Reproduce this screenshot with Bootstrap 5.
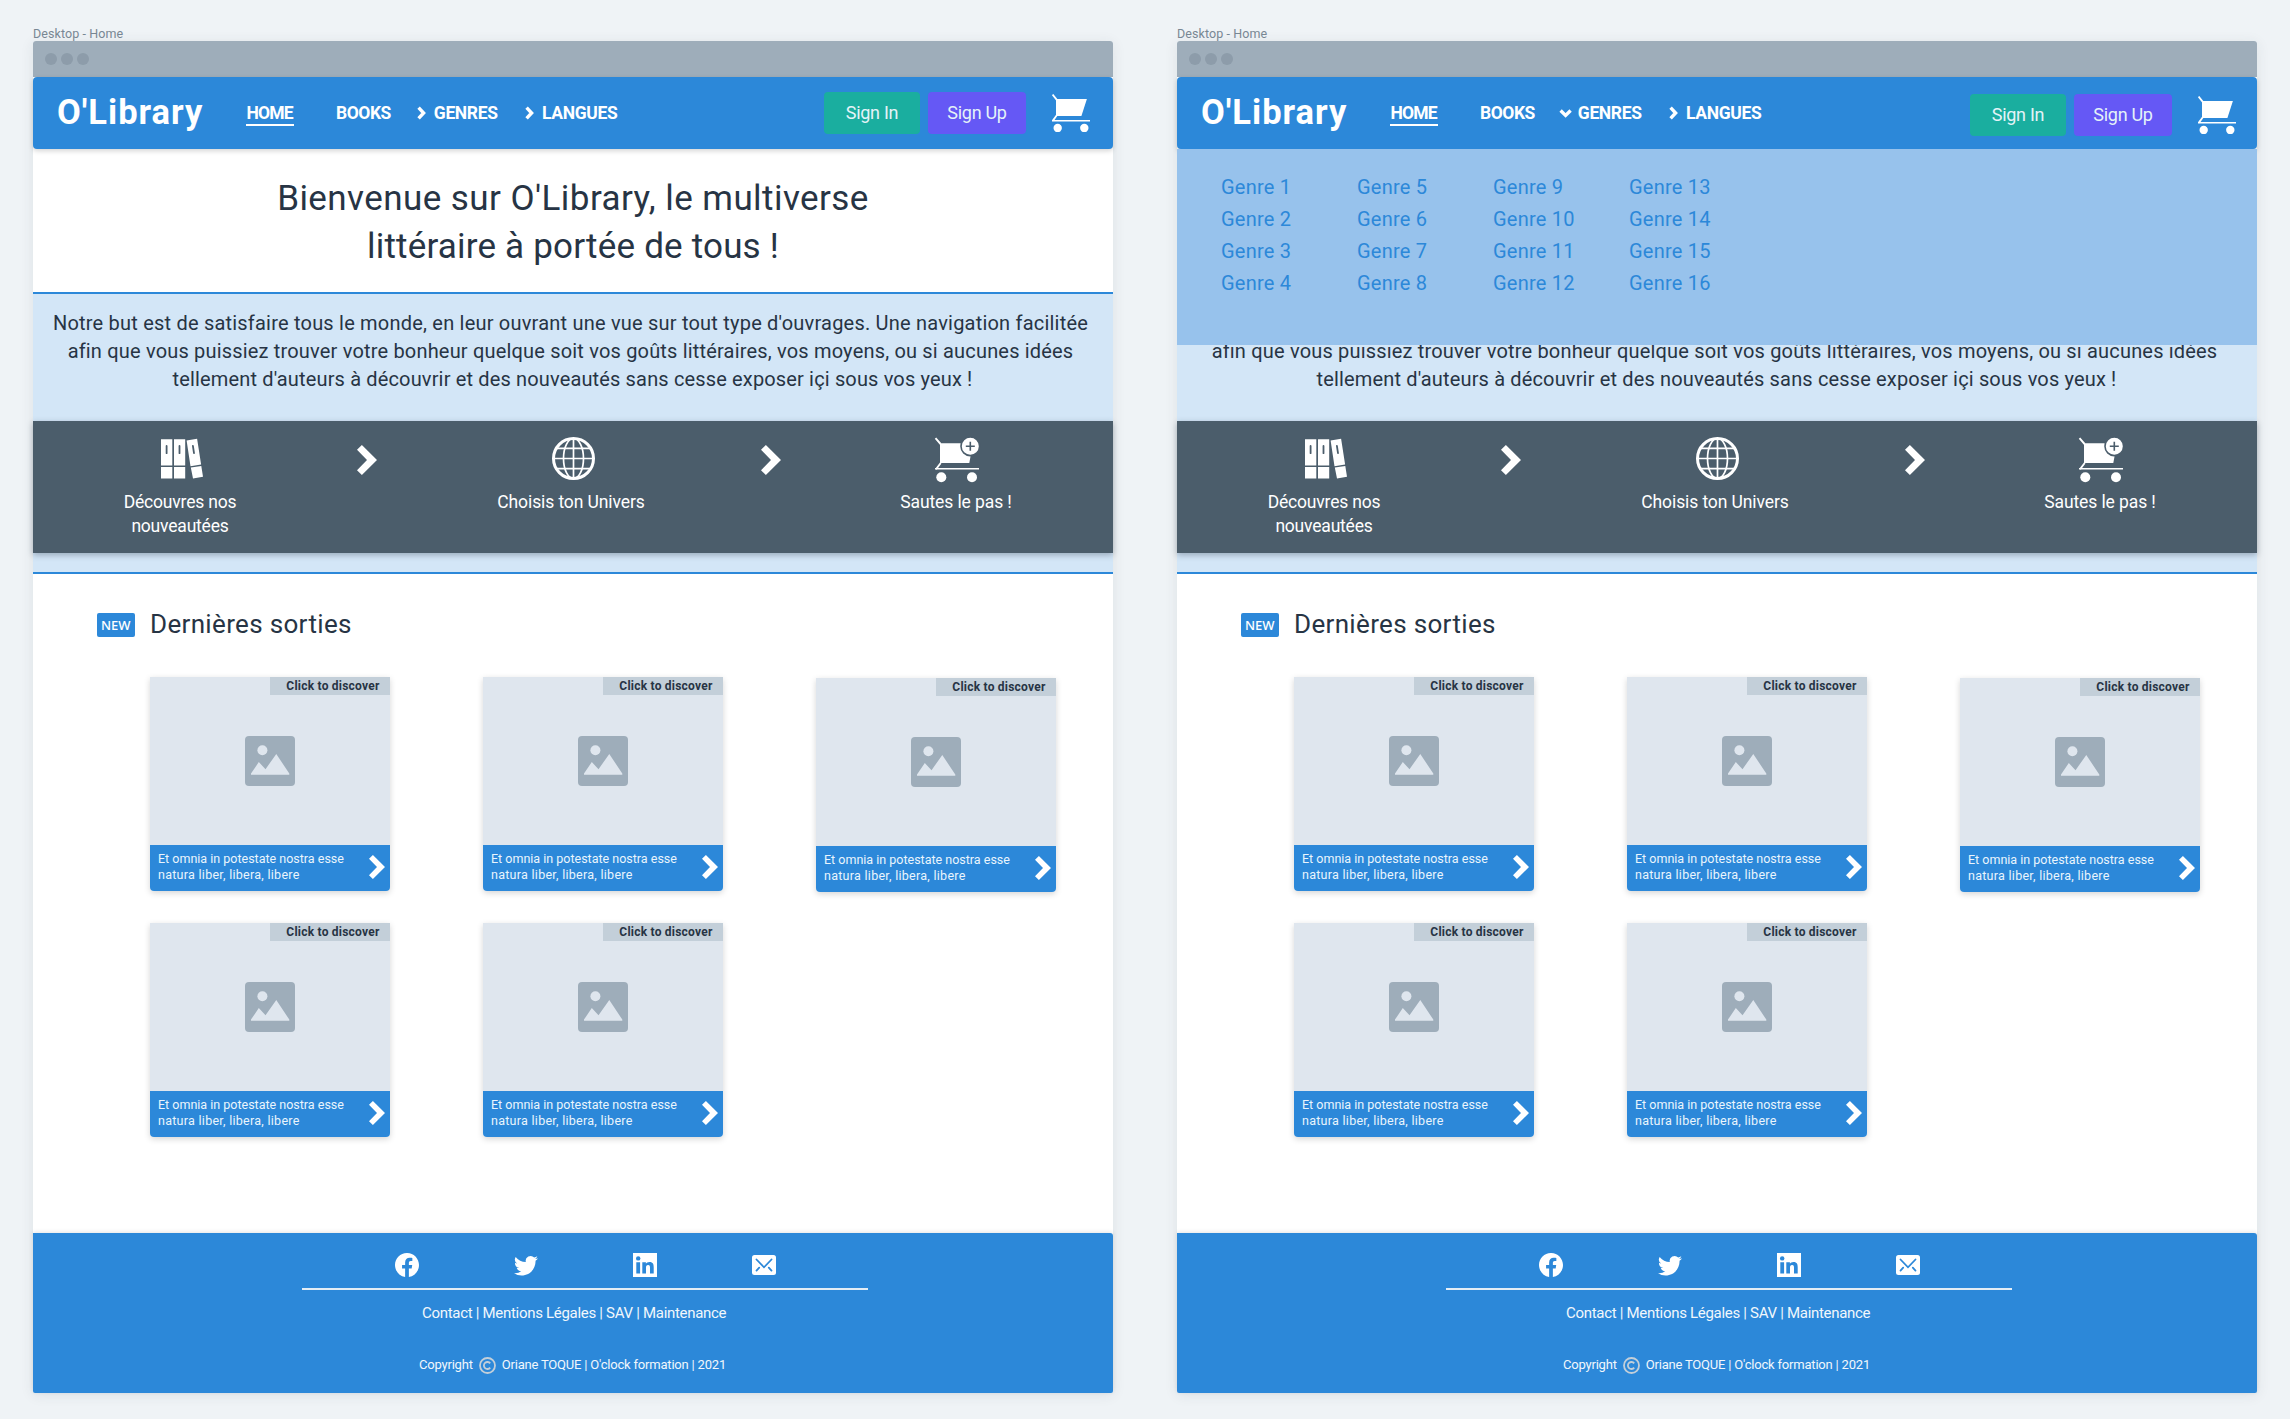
<!DOCTYPE html>
<html lang="fr">
<head>
<meta charset="utf-8">
<meta name="viewport" content="width=device-width, initial-scale=1">
<title>O'Library</title>
<link href="https://cdn.jsdelivr.net/npm/bootstrap@5.3.0/dist/css/bootstrap.min.css" rel="stylesheet">
<style>
:root{--blue:#2c88d9;--ink:#273444}
body{background:#eff3f6;font-family:Roboto,"Liberation Sans",sans-serif;color:var(--ink);min-height:1419px;padding-left:33px;gap:64px}
p,h1,h2{font-weight:400;margin:0;white-space:nowrap}
svg{display:block;flex:none}
.board{width:1080px;padding-top:25px}
.board-label{font-size:12.5px;line-height:18px;height:16px;letter-spacing:.085px;color:#788793}
.window{background:#fff;box-shadow:0 2px 14px rgba(39,52,68,.09);border-radius:3px}
.chrome{height:36px;background:#9eadba;border-radius:3px 3px 0 0;padding-left:12px;gap:4px}
.chrome i{width:12px;height:12px;border-radius:50%;background:#8d9caa}
.site-nav{height:72px;background:var(--blue);border-radius:4px;padding:0 23px 0 24px;box-shadow:0 2px 5px rgba(0,0,0,.17);color:#fff;z-index:2}
.site-nav.opened{padding-right:21px}
.opened .actions{margin-top:4px}
.brand{font-size:34.5px;font-weight:700;letter-spacing:1px;width:189.5px;line-height:40px;margin-top:-3px;white-space:nowrap}
.menu-item{font-size:17.5px;font-weight:700;line-height:18px;letter-spacing:-.35px}
.menu-home{width:89.5px}
.menu-home span{letter-spacing:-.85px;padding-bottom:2px;border-bottom:2px solid #fff;margin-bottom:-4px;display:inline-block;padding-right:1px;padding-left:1px;margin-left:-1px}
.menu-books{width:80.8px;letter-spacing:-.45px}
.menu-genres{width:108.3px}
.menu-item svg{width:17px}
.menu-item:last-of-type{letter-spacing:-.25px}
.btn-nav{height:42px;border-radius:4px;font-size:18px;line-height:24px;letter-spacing:-.3px;padding:0;color:#e4f3f8;border:0}
.btn-in{width:96px;background:#1aae9f}.btn-up{width:98px;background:#6558f5}
.cart-link{margin-left:26px}
.genres-menu{position:absolute;top:100%;left:0;right:0;height:196px;background:#97c2ec;color:var(--blue);padding:22px 0 0 44px;display:grid;grid-template-columns:repeat(4,136px);grid-template-rows:repeat(4,32px);grid-auto-flow:column;font-size:20px;line-height:32px;letter-spacing:.22px}
.hero{height:143px;padding-top:26px;text-align:center}
.hero h1{font-size:35px;line-height:48px;letter-spacing:.436px}
.hero span{letter-spacing:.19px}
.intro{border:solid var(--blue);border-width:2px 0;background:#d3e6f7;height:282px;padding-top:15px}
.intro>p{height:112px;font-size:20px;line-height:28px;letter-spacing:.208px;text-align:center;padding-right:5px}
.intro>p span{letter-spacing:.18px}
.intro>p span+br+span{letter-spacing:.15px;margin-left:4px}
.steps{height:132px;background:#4b5d6b;color:#fff;padding-left:63px;box-shadow:0 2px 6px rgba(39,52,68,.35)}
.step{width:170px;padding-top:14px;text-align:center;font-size:17.5px;line-height:24px;letter-spacing:-.1px}
.step svg{margin:0 auto 7px}
.step p{padding-right:2px}
.step-tight{letter-spacing:-.2px}
.arrow{margin-top:24px}
.latest{height:659px;padding-top:34px}
.latest-head{padding-left:64px;gap:15.5px;height:32px}
.new-tag{width:37.5px;height:24px;border-radius:2px;background:var(--blue);color:#fff;font:500 13px/24px "Noto Sans",sans-serif;text-align:center;margin-top:2px}
.latest h2{font-size:26px;line-height:32px;letter-spacing:.334px}
.books{display:grid;grid-template-columns:repeat(3,240px);gap:32px 93px;padding:37px 0 0 117px;align-items:start}
.book{height:214px;border-radius:0 0 4px 4px;box-shadow:0 2px 6px rgba(0,0,0,.17);overflow:hidden}
.book-low{margin:1px 0 -1px}
.cover{height:168px;background:#dfe6ee}
.ribbon{position:absolute;top:0;right:0;width:120px;height:18px;background:#c3cfd9;font-size:12px;font-weight:700;line-height:18px;letter-spacing:.22px;text-align:right;padding-right:10.5px}
.caption{height:46px;background:var(--blue);color:#eaf5fd;font-size:12.5px;line-height:16px;padding:6px 5px 0 8px}
.caption span{letter-spacing:.275px}
.caption svg{margin-top:4px}
.site-foot{height:160px;background:var(--blue);color:#f1f7fc;padding-top:20px;border-radius:0 3px 2px 2px;box-shadow:0 -1px 4px rgba(0,0,0,.1)}
.social{padding-left:362px;gap:95px;height:24px}
.rule{width:566px;height:2px;background:#e4edf5;margin:11px 0 11px 269px}
.links{font-size:15px;line-height:24px;letter-spacing:-.3px;padding-left:389px}
.legal{font-size:13px;line-height:20px;letter-spacing:-.2px;padding:30px 0 0 386px}
.legal svg{margin:0 6px 0 6px}
</style>
<script src="https://cdn.jsdelivr.net/npm/bootstrap@5.3.0/dist/js/bootstrap.bundle.min.js"></script>
</head>
<body class="d-flex align-items-start">

<svg width="0" height="0" class="position-absolute">
  <symbol id="cart" viewBox="0 0 38 38"><path d="M.6.6 4.6 5.6M4.6 21.5.9 26.6" stroke="#fff" stroke-width="1.8" fill="none"/><path d="M4 5h30.9l-5.5 17H4zM0 26.1h38v1.3H0z" fill="#fff"/><circle cx="5.7" cy="34" r="4.2" fill="#fff"/><circle cx="32.3" cy="34" r="4.2" fill="#fff"/></symbol>
  <symbol id="cart-plus" viewBox="0 0 48 48"><path d="M2.5 3.2 7.6 9M7.7 28 3 34.2" stroke="#fff" stroke-width="1.9" fill="none"/><path d="M7 8.3h33L36.3 28H7zM2 33h44v1.6H2z" fill="#fff"/><circle cx="8.3" cy="42.3" r="5" fill="#fff"/><circle cx="39" cy="42.3" r="5" fill="#fff"/><circle cx="37.3" cy="11.3" r="9.3" fill="#fff" stroke="#4b5d6b" stroke-width="1.6"/><path d="M37.3 6.8v9M32.8 11.3h9" stroke="#4b5d6b" stroke-width="1.6"/></symbol>
  <symbol id="shelf" viewBox="0 0 48 48"><g fill="#fff"><path d="M4 4.3h11.3v26.2H4zM4 32h11.3v11.6H4zM17 4.3h11.2v26.2H17zM17 32h11.2v11.6H17z"/><path d="m29.6 5.4 10.5-1.7 4 25.9-10.6 1.6zM33.8 32.6l10.5-1.6 1.7 10.7L36 43.4z"/></g><g stroke="#4b5d6b" stroke-width="1.8" stroke-linecap="round"><path d="M9.6 11v7.2M22.500 11v7.2M35.9 10.9l1.1 7.2"/></g></symbol>
  <symbol id="globe" viewBox="0 0 48 48"><g fill="none" stroke="#fff"><circle cx="25.5" cy="23.5" r="20" stroke-width="3"/><ellipse cx="25.5" cy="23.5" rx="10" ry="20" stroke-width="1.7"/><path d="M25.5 3.5v40M5.5 23.5h40M8.5 13.4h34M8.5 33.6h34" stroke-width="1.7"/></g></symbol>
  <symbol id="chev" viewBox="0 0 20 30"><path d="M4.9 0 20 15 4.9 30 0 25.2 10 15 0 4.8z" fill="#fff"/></symbol>
  <symbol id="photo" viewBox="0 0 50 50"><rect width="50" height="50" rx="4" fill="#9eadba"/><circle cx="17.4" cy="14.2" r="5" fill="#dfe6ee"/><path d="M6 38.8v-1.2L13.8 26l6.7 7.2L31.3 18l13 19.6v1.2z" fill="#dfe6ee"/></symbol>
  <symbol id="facebook" viewBox="0 0 16 16"><path fill="#fff" d="M16 8.049c0-4.446-3.582-8.05-8-8.05C3.58 0-.002 3.603-.002 8.05c0 4.017 2.926 7.347 6.75 7.951v-5.625h-2.03V8.05H6.75V6.275c0-2.017 1.195-3.131 3.022-3.131.876 0 1.791.157 1.791.157v1.98h-1.009c-.993 0-1.303.621-1.303 1.258v1.51h2.218l-.354 2.326H9.25V16c3.824-.604 6.75-3.934 6.75-7.951z"/></symbol>
  <symbol id="twitter" viewBox="0 0 16 16"><path fill="#fff" d="M5.026 15c6.038 0 9.341-5.003 9.341-9.334 0-.14 0-.282-.006-.422A6.685 6.685 0 0 0 16 3.542a6.658 6.658 0 0 1-1.889.518 3.301 3.301 0 0 0 1.447-1.817 6.533 6.533 0 0 1-2.087.793A3.286 3.286 0 0 0 7.875 6.03a9.325 9.325 0 0 1-6.767-3.429 3.289 3.289 0 0 0 1.018 4.382A3.323 3.323 0 0 1 .64 6.575v.045a3.288 3.288 0 0 0 2.632 3.218 3.203 3.203 0 0 1-.865.115 3.23 3.23 0 0 1-.614-.057 3.283 3.283 0 0 0 3.067 2.277A6.588 6.588 0 0 1 .78 13.58a6.32 6.32 0 0 1-.78-.045A9.344 9.344 0 0 0 5.026 15z"/></symbol>
  <symbol id="linkedin" viewBox="0 0 24 24"><path fill="#fff" d="M0 0h24v24H0z"/><g fill="#2c88d9"><circle cx="5.2" cy="5.4" r="2.2"/><path d="M3.3 9.2h3.8v11.2H3.3zM9.3 9.2h3.6v1.5c.6-1 1.900-1.800 3.600-1.800 3.600 0 4.200 2.300 4.200 5.300v6.200h-3.700v-5.500c0-1.300 0-3-1.900-3s-2.100 1.400-2.100 2.900v5.600H9.300z"/></g></symbol>
  <symbol id="mail" viewBox="0 0 24 24"><rect y="2" width="24" height="20" rx="2.5" fill="#fff"/><path d="m4.500 6.500 7.500 7.800 7.500-7.800M4.500 17.600l2.700-2.900M19.500 17.600l-2.700-2.900" stroke="#2c88d9" stroke-width="1.8" stroke-linecap="round" fill="none"/></symbol>
  <symbol id="copy" viewBox="0 0 17 17"><g fill="none" stroke="#c3cfd9" stroke-width="1.8"><circle cx="8.5" cy="8.5" r="7.5"/><path d="M11.200 6.400a3.500 3.500 0 1 0 0 4.200"/></g></symbol>
</svg>

<section class="board">
  <p class="board-label">Desktop - Home</p>
  <div class="window">
    <div class="chrome d-flex align-items-center"><i></i><i></i><i></i></div>
    <nav class="site-nav d-flex align-items-center position-relative">
      <div class="brand">O'Library</div>
      <div class="menu-item menu-home"><span>HOME</span></div>
      <div class="menu-item menu-books">BOOKS</div>
      <div class="menu-item menu-genres d-flex align-items-center"><svg height="14" viewBox="0 0 17 14"><path d="m1.600 1.700 5 5.300-5 5.300" fill="none" stroke="#fff" stroke-width="3.4"/></svg>GENRES</div>
      <div class="menu-item d-flex align-items-center"><svg height="14" viewBox="0 0 17 14"><path d="m1.600 1.700 5 5.300-5 5.300" fill="none" stroke="#fff" stroke-width="3.4"/></svg>LANGUES</div>
      <div class="actions d-flex align-items-center ms-auto">
        <button class="btn btn-nav btn-in me-2">Sign In</button>
        <button class="btn btn-nav btn-up">Sign Up</button>
        <svg class="cart-link" width="38" height="38"><use href="#cart"/></svg>
      </div>
    </nav>
    <header class="hero"><h1>Bienvenue sur O'Library, le multiverse<br><span>littéraire à portée de tous !</span></h1></header>
    <section class="intro">
      <p>Notre but est de satisfaire tous le monde, en leur ouvrant une vue sur tout type d'ouvrages. Une navigation facilitée<br><span>afin que vous puissiez trouver votre bonheur quelque soit vos goûts littéraires, vos moyens, ou si aucunes idées</span><br><span>tellement d'auteurs à découvrir et des nouveautés sans cesse exposer içi sous vos yeux !</span></p>
      <div class="steps d-flex align-items-start">
        <div class="step step-tight"><svg width="48" height="48"><use href="#shelf"/></svg><p>Découvres nos<br>nouveautées</p></div>
        <svg class="arrow" style="margin-left:91px" width="20" height="30"><use href="#chev"/></svg>
        <div class="step" style="margin-left:110px"><svg width="48" height="48"><use href="#globe"/></svg><p>Choisis ton Univers</p></div>
        <svg class="arrow" style="margin-left:104px" width="20" height="30"><use href="#chev"/></svg>
        <div class="step" style="margin-left:91px"><svg width="48" height="48"><use href="#cart-plus"/></svg><p>Sautes le pas !</p></div>
      </div>
    </section>
    <main class="latest">
      <div class="latest-head d-flex align-items-center"><span class="new-tag">NEW</span><h2>Dernières sorties</h2></div>
      <div class="books">
        <article class="book position-relative"><div class="cover d-flex align-items-center justify-content-center"><svg width="50" height="50"><use href="#photo"/></svg></div><div class="ribbon">Click to discover</div><div class="caption d-flex justify-content-between align-items-start"><p>Et omnia in potestate nostra esse<br><span>natura liber, libera, libere</span></p><svg width="16" height="24"><use href="#chev"/></svg></div></article>
        <article class="book position-relative"><div class="cover d-flex align-items-center justify-content-center"><svg width="50" height="50"><use href="#photo"/></svg></div><div class="ribbon">Click to discover</div><div class="caption d-flex justify-content-between align-items-start"><p>Et omnia in potestate nostra esse<br><span>natura liber, libera, libere</span></p><svg width="16" height="24"><use href="#chev"/></svg></div></article>
        <article class="book book-low position-relative"><div class="cover d-flex align-items-center justify-content-center"><svg width="50" height="50"><use href="#photo"/></svg></div><div class="ribbon">Click to discover</div><div class="caption d-flex justify-content-between align-items-start"><p>Et omnia in potestate nostra esse<br><span>natura liber, libera, libere</span></p><svg width="16" height="24"><use href="#chev"/></svg></div></article>
        <article class="book position-relative"><div class="cover d-flex align-items-center justify-content-center"><svg width="50" height="50"><use href="#photo"/></svg></div><div class="ribbon">Click to discover</div><div class="caption d-flex justify-content-between align-items-start"><p>Et omnia in potestate nostra esse<br><span>natura liber, libera, libere</span></p><svg width="16" height="24"><use href="#chev"/></svg></div></article>
        <article class="book position-relative"><div class="cover d-flex align-items-center justify-content-center"><svg width="50" height="50"><use href="#photo"/></svg></div><div class="ribbon">Click to discover</div><div class="caption d-flex justify-content-between align-items-start"><p>Et omnia in potestate nostra esse<br><span>natura liber, libera, libere</span></p><svg width="16" height="24"><use href="#chev"/></svg></div></article>
      </div>
    </main>
    <footer class="site-foot">
      <div class="social d-flex align-items-center"><svg width="24" height="24"><use href="#facebook"/></svg><svg width="24" height="24"><use href="#twitter"/></svg><svg width="24" height="24"><use href="#linkedin"/></svg><svg width="24" height="24"><use href="#mail"/></svg></div>
      <div class="rule"></div>
      <p class="links">Contact | Mentions Légales | SAV | Maintenance</p>
      <div class="legal d-flex align-items-center"><p>Copyright</p><svg width="17" height="17"><use href="#copy"/></svg><p>Oriane TOQUE | O'clock formation | 2021</p></div>
    </footer>
  </div>
</section>

<section class="board">
  <p class="board-label">Desktop - Home</p>
  <div class="window">
    <div class="chrome d-flex align-items-center"><i></i><i></i><i></i></div>
    <nav class="site-nav opened d-flex align-items-center position-relative">
      <div class="brand">O'Library</div>
      <div class="menu-item menu-home"><span>HOME</span></div>
      <div class="menu-item menu-books">BOOKS</div>
      <div class="menu-item menu-genres d-flex align-items-center"><svg height="14" viewBox="0 0 17 14" overflow="visible"><path d="m-.4 4.600 5 4.800 5-4.800" fill="none" stroke="#fff" stroke-width="3.4"/></svg>GENRES</div>
      <div class="menu-item d-flex align-items-center"><svg height="14" viewBox="0 0 17 14"><path d="m1.600 1.700 5 5.300-5 5.300" fill="none" stroke="#fff" stroke-width="3.4"/></svg>LANGUES</div>
      <div class="actions d-flex align-items-center ms-auto">
        <button class="btn btn-nav btn-in me-2">Sign In</button>
        <button class="btn btn-nav btn-up">Sign Up</button>
        <svg class="cart-link" width="38" height="38"><use href="#cart"/></svg>
      </div>
      <div class="genres-menu"><span>Genre 1</span><span>Genre 2</span><span>Genre 3</span><span>Genre 4</span><span>Genre 5</span><span>Genre 6</span><span>Genre 7</span><span>Genre 8</span><span>Genre 9</span><span>Genre 10</span><span>Genre 11</span><span>Genre 12</span><span>Genre 13</span><span>Genre 14</span><span>Genre 15</span><span>Genre 16</span></div>
    </nav>
    <header class="hero"></header>
    <section class="intro">
      <p><br><span>afin que vous puissiez trouver votre bonheur quelque soit vos goûts littéraires, vos moyens, ou si aucunes idées</span><br><span>tellement d'auteurs à découvrir et des nouveautés sans cesse exposer içi sous vos yeux !</span></p>
      <div class="steps d-flex align-items-start">
        <div class="step step-tight"><svg width="48" height="48"><use href="#shelf"/></svg><p>Découvres nos<br>nouveautées</p></div>
        <svg class="arrow" style="margin-left:91px" width="20" height="30"><use href="#chev"/></svg>
        <div class="step" style="margin-left:110px"><svg width="48" height="48"><use href="#globe"/></svg><p>Choisis ton Univers</p></div>
        <svg class="arrow" style="margin-left:104px" width="20" height="30"><use href="#chev"/></svg>
        <div class="step" style="margin-left:91px"><svg width="48" height="48"><use href="#cart-plus"/></svg><p>Sautes le pas !</p></div>
      </div>
    </section>
    <main class="latest">
      <div class="latest-head d-flex align-items-center"><span class="new-tag">NEW</span><h2>Dernières sorties</h2></div>
      <div class="books">
        <article class="book position-relative"><div class="cover d-flex align-items-center justify-content-center"><svg width="50" height="50"><use href="#photo"/></svg></div><div class="ribbon">Click to discover</div><div class="caption d-flex justify-content-between align-items-start"><p>Et omnia in potestate nostra esse<br><span>natura liber, libera, libere</span></p><svg width="16" height="24"><use href="#chev"/></svg></div></article>
        <article class="book position-relative"><div class="cover d-flex align-items-center justify-content-center"><svg width="50" height="50"><use href="#photo"/></svg></div><div class="ribbon">Click to discover</div><div class="caption d-flex justify-content-between align-items-start"><p>Et omnia in potestate nostra esse<br><span>natura liber, libera, libere</span></p><svg width="16" height="24"><use href="#chev"/></svg></div></article>
        <article class="book book-low position-relative"><div class="cover d-flex align-items-center justify-content-center"><svg width="50" height="50"><use href="#photo"/></svg></div><div class="ribbon">Click to discover</div><div class="caption d-flex justify-content-between align-items-start"><p>Et omnia in potestate nostra esse<br><span>natura liber, libera, libere</span></p><svg width="16" height="24"><use href="#chev"/></svg></div></article>
        <article class="book position-relative"><div class="cover d-flex align-items-center justify-content-center"><svg width="50" height="50"><use href="#photo"/></svg></div><div class="ribbon">Click to discover</div><div class="caption d-flex justify-content-between align-items-start"><p>Et omnia in potestate nostra esse<br><span>natura liber, libera, libere</span></p><svg width="16" height="24"><use href="#chev"/></svg></div></article>
        <article class="book position-relative"><div class="cover d-flex align-items-center justify-content-center"><svg width="50" height="50"><use href="#photo"/></svg></div><div class="ribbon">Click to discover</div><div class="caption d-flex justify-content-between align-items-start"><p>Et omnia in potestate nostra esse<br><span>natura liber, libera, libere</span></p><svg width="16" height="24"><use href="#chev"/></svg></div></article>
      </div>
    </main>
    <footer class="site-foot">
      <div class="social d-flex align-items-center"><svg width="24" height="24"><use href="#facebook"/></svg><svg width="24" height="24"><use href="#twitter"/></svg><svg width="24" height="24"><use href="#linkedin"/></svg><svg width="24" height="24"><use href="#mail"/></svg></div>
      <div class="rule"></div>
      <p class="links">Contact | Mentions Légales | SAV | Maintenance</p>
      <div class="legal d-flex align-items-center"><p>Copyright</p><svg width="17" height="17"><use href="#copy"/></svg><p>Oriane TOQUE | O'clock formation | 2021</p></div>
    </footer>
  </div>
</section>
</body>
</html>
